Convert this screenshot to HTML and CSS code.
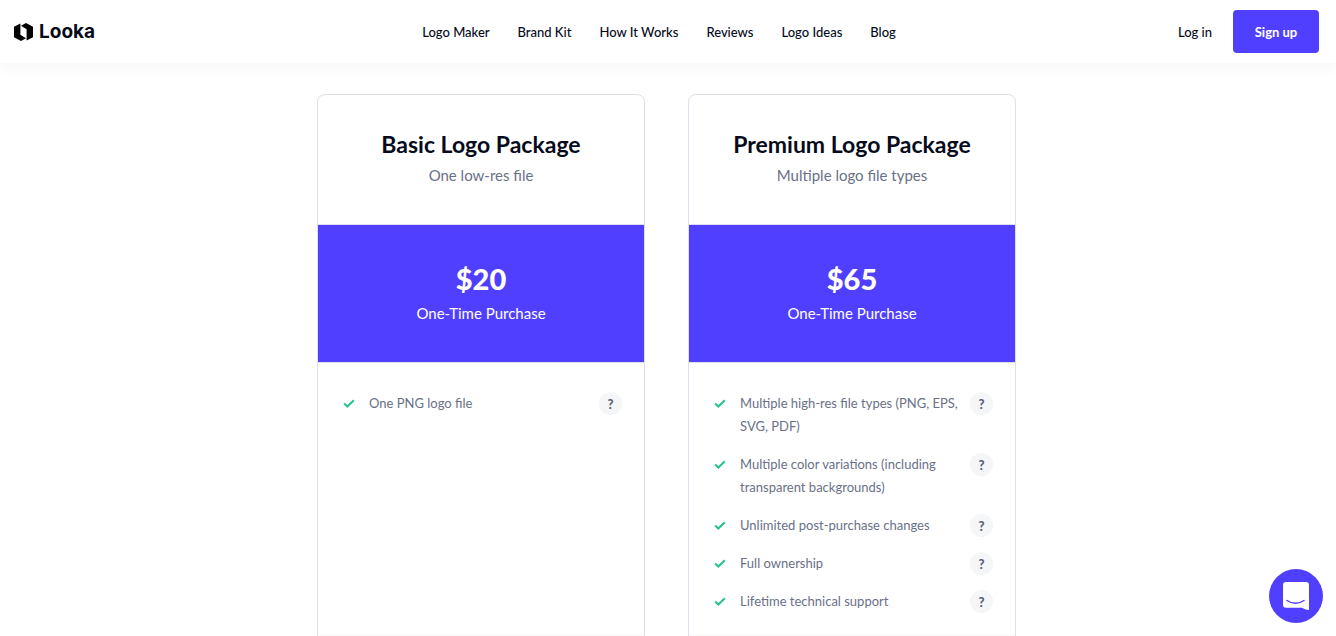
FILE: index.html
```
<!DOCTYPE html>
<html lang="en">
<head>
    <meta charset="UTF-8">
    <meta name="viewport" content="width=device-width, initial-scale=1.0">
    <title>Looka Logo Packages</title>
    <link rel="stylesheet" href="styles.css">
</head>
<body>
    <svg class="sprite" aria-hidden="true">
        <symbol id="check" viewBox="0 0 12 9">
            <path d="M1.2 4.6 4.3 7.5 10.8 1.2" fill="none" stroke="currentColor" stroke-width="2"/>
        </symbol>
    </svg>

    <header class="header">
        <div class="header-left">
            <a class="logo" href="#">
                <svg class="logo-mark" viewBox="0 0 19 18" aria-hidden="true">
                    <path d="M6.4.4 0 3.8v10.4L7 18l5-2.8-5.6-3.4z"/>
                    <path d="M12 0 7 2.8l5.6 3.4v11.4l6.4-3.4V3.8z"/>
                </svg>
                <span>Looka</span>
            </a>
        </div>
        <nav class="nav">
            <a href="#">Logo Maker</a>
            <a href="#">Brand Kit</a>
            <a href="#">How It Works</a>
            <a href="#">Reviews</a>
            <a href="#">Logo Ideas</a>
            <a href="#">Blog</a>
        </nav>
        <div class="header-right">
            <a class="login" href="#">Log in</a>
            <button class="signup" type="button">Sign up</button>
        </div>
    </header>

    <main class="packages">
        <section class="card">
            <div class="card-title">
                <h2>Basic Logo Package</h2>
                <p>One low-res file</p>
            </div>
            <div class="card-price">
                <strong>$20</strong>
                <p>One-Time Purchase</p>
            </div>
            <ul class="features">
                <li>
                    <svg class="check"><use href="#check"/></svg>
                    <span>One PNG logo file</span>
                    <button class="help" type="button">?</button>
                </li>
            </ul>
            <div class="card-footer"></div>
        </section>

        <section class="card">
            <div class="card-title">
                <h2>Premium Logo Package</h2>
                <p>Multiple logo file types</p>
            </div>
            <div class="card-price">
                <strong>$65</strong>
                <p>One-Time Purchase</p>
            </div>
            <ul class="features">
                <li>
                    <svg class="check"><use href="#check"/></svg>
                    <span>Multiple high-res file types (PNG, EPS, SVG, PDF)</span>
                    <button class="help" type="button">?</button>
                </li>
                <li>
                    <svg class="check"><use href="#check"/></svg>
                    <span>Multiple color variations (including transparent backgrounds)</span>
                    <button class="help" type="button">?</button>
                </li>
                <li>
                    <svg class="check"><use href="#check"/></svg>
                    <span>Unlimited post-purchase changes</span>
                    <button class="help" type="button">?</button>
                </li>
                <li>
                    <svg class="check"><use href="#check"/></svg>
                    <span>Full ownership</span>
                    <button class="help" type="button">?</button>
                </li>
                <li>
                    <svg class="check"><use href="#check"/></svg>
                    <span>Lifetime technical support</span>
                    <button class="help" type="button">?</button>
                </li>
            </ul>
            <div class="card-footer"></div>
        </section>
    </main>

    <button class="chat" type="button" aria-label="Open chat">
        <svg viewBox="0 0 26 28" aria-hidden="true">
            <path d="M3 0h20a3 3 0 0 1 3 3v25c-3-.4-5-1.2-7-2.300H3a3 3 0 0 1-3-3V3a3 3 0 0 1 3-3z" fill="#fff"/>
            <path d="M4 18.500c5 3.600 12 3.600 17 0" fill="none" stroke="#513fff" stroke-width="1.400" stroke-linecap="round"/>
        </svg>
    </button>
</body>
</html>
```
FILE: styles.css
```
* {
    box-sizing: border-box;
}
body {
    margin: 0;
    font-family: Lato, 'Liberation Sans', sans-serif;
    color: #060b1b;
    background-color: #fff;
}
a {
    color: inherit;
    text-decoration: none;
}
button {
    font-family: inherit;
    border: none;
    padding: 0;
    cursor: pointer;
}
h2, p, ul {
    margin: 0;
    padding: 0;
}
.sprite {
    display: none;
}
.header {
    position: sticky;
    top: 0;
    display: flex;
    align-items: center;
    height: 63px;
    padding: 0 17px 0 14px;
    background-color: #fff;
    box-shadow: 0 4px 16px rgba(0, 0, 0, 0.04);
    font-size: 13px;
    font-weight: 500;
}
.header-left, .header-right {
    flex: 1;
    display: flex;
    align-items: center;
}
.header-right {
    justify-content: flex-end;
    gap: 21px;
}
.logo {
    display: flex;
    align-items: center;
    gap: 6px;
    font-family: Inter, sans-serif;
    font-size: 19px;
    font-weight: 700;
}
.logo-mark {
    width: 19px;
    height: 18px;
}
.nav {
    display: flex;
    gap: 28px;
    padding-right: 15px;
}
.signup {
    width: 86px;
    height: 43px;
    border-radius: 4px;
    background-color: #513fff;
    color: #fff;
    font-size: 13px;
    font-weight: 700;
}
.packages {
    display: flex;
    justify-content: center;
    gap: 43px;
    padding: 31px 16px 40px 13px;
}
.card {
    flex: 0 1 328px;
    display: flex;
    flex-direction: column;
    overflow: hidden;
    border: 1px solid #dfdfeb;
    border-radius: 8px;
    text-align: center;
}
.card-title {
    padding: 33px 20px 34px;
    border-bottom: 1px solid #dfdfeb;
}
.card-title h2 {
    font-size: 23px;
    line-height: 32px;
    font-weight: 700;
}
.card-title p {
    font-size: 15px;
    line-height: 30px;
    color: #6a7088;
}
.card-price {
    padding: 34px 20px;
    border-bottom: 1px solid #dfdfeb;
    background-color: #513fff;
    color: #fff;
}
.card-price strong {
    display: block;
    font-size: 29px;
    line-height: 39px;
    font-weight: 900;
}
.card-price p {
    font-size: 15px;
    line-height: 30px;
}
.features {
    flex: 1;
    display: grid;
    align-content: start;
    gap: 15px;
    padding: 29px 22px 21px;
    list-style: none;
    text-align: left;
    color: #6a7088;
}
.features li {
    display: flex;
    align-items: flex-start;
    font-size: 13px;
    line-height: 23px;
}
.features span {
    flex: 1;
    padding-right: 8px;
}
.check {
    width: 12px;
    height: 9px;
    margin: 7px 14px 0 3px;
    color: #26c28d;
}
.help {
    width: 23px;
    height: 23px;
    border-radius: 50%;
    background-color: #f5f6f8;
    color: #5a607a;
    font-size: 13px;
    font-weight: 900;
}
.card-footer {
    height: 100px;
    background-color: #fafafa;
}
.chat {
    position: fixed;
    right: 13px;
    bottom: 13px;
    display: flex;
    align-items: center;
    justify-content: center;
    width: 54px;
    height: 54px;
    border-radius: 50%;
    background-color: #513fff;
}
.chat svg {
    width: 26px;
    height: 28px;
}
```
